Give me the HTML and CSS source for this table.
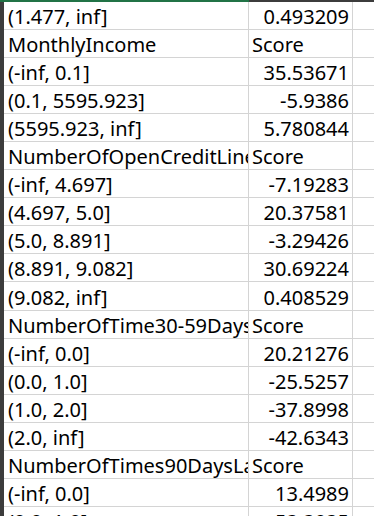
FILE: index.html
```html
<!DOCTYPE html>
<html>
<head>
<meta charset="utf-8">
<link rel="stylesheet" href="styles.css">
</head>
<body>
<div class="sheet">
  <div class="topbar">
    <div class="top-sel"></div>
    <div class="top-rest"></div>
  </div>
  <div class="main">
    <div class="rowhdr"></div>
    <div class="grid">
      <div class="row"><div class="cell a">(1.477, inf]</div><div class="cell b num">0.493209</div><div class="cell c"></div></div>
      <div class="row"><div class="cell a">MonthlyIncome</div><div class="cell b">Score</div><div class="cell c"></div></div>
      <div class="row"><div class="cell a">(-inf, 0.1]</div><div class="cell b num">35.53671</div><div class="cell c"></div></div>
      <div class="row"><div class="cell a">(0.1, 5595.923]</div><div class="cell b num">-5.9386</div><div class="cell c"></div></div>
      <div class="row"><div class="cell a">(5595.923, inf]</div><div class="cell b num">5.780844</div><div class="cell c"></div></div>
      <div class="row"><div class="cell a">NumberOfOpenCreditLinesAndLoans</div><div class="cell b">Score</div><div class="cell c"></div></div>
      <div class="row"><div class="cell a">(-inf, 4.697]</div><div class="cell b num">-7.19283</div><div class="cell c"></div></div>
      <div class="row"><div class="cell a">(4.697, 5.0]</div><div class="cell b num">20.37581</div><div class="cell c"></div></div>
      <div class="row"><div class="cell a">(5.0, 8.891]</div><div class="cell b num">-3.29426</div><div class="cell c"></div></div>
      <div class="row"><div class="cell a">(8.891, 9.082]</div><div class="cell b num">30.69224</div><div class="cell c"></div></div>
      <div class="row"><div class="cell a">(9.082, inf]</div><div class="cell b num">0.408529</div><div class="cell c"></div></div>
      <div class="row"><div class="cell a">NumberOfTime30-59DaysPastDueNotWorse</div><div class="cell b">Score</div><div class="cell c"></div></div>
      <div class="row"><div class="cell a">(-inf, 0.0]</div><div class="cell b num">20.21276</div><div class="cell c"></div></div>
      <div class="row"><div class="cell a">(0.0, 1.0]</div><div class="cell b num">-25.5257</div><div class="cell c"></div></div>
      <div class="row"><div class="cell a">(1.0, 2.0]</div><div class="cell b num">-37.8998</div><div class="cell c"></div></div>
      <div class="row"><div class="cell a">(2.0, inf]</div><div class="cell b num">-42.6343</div><div class="cell c"></div></div>
      <div class="row"><div class="cell a">NumberOfTimes90DaysLate</div><div class="cell b">Score</div><div class="cell c"></div></div>
      <div class="row"><div class="cell a">(-inf, 0.0]</div><div class="cell b num">13.4989</div><div class="cell c"></div></div>
      <div class="row"><div class="cell a">(0.0, 1.0]</div><div class="cell b num">-53.3035</div><div class="cell c"></div></div>
    </div>
  </div>
</div>
</body>
</html>
```
FILE: styles.css
```css
html, body {
  margin: 0;
  padding: 0;
  background: #ffffff;
  overflow: hidden;
}
.sheet {
  width: 374px;
  height: 516px;
  overflow: hidden;
  font-family: "Noto Sans", sans-serif;
  font-size: 20px;
  color: #000;
}
.topbar {
  display: flex;
  height: 2px;
}
.top-sel {
  width: 249px;
  background: #217346;
}
.top-rest {
  flex: 1;
  background: #3c3c3c;
}
.main {
  display: flex;
}
.rowhdr {
  width: 4px;
  flex: none;
  background: #3c3c3c;
}
.grid {
  flex: 1;
  display: flex;
  flex-direction: column;
}
.row {
  display: grid;
  grid-template-columns: 245px 104px 1fr;
  height: 28.06px;
  box-sizing: border-box;
  border-bottom: 1px solid #d4d4d4;
}
.cell {
  display: flex;
  align-items: flex-end;
  line-height: 20px;
  padding: 0 3px 2px 4px;
  white-space: nowrap;
  overflow: hidden;
  border-right: 1px solid #d4d4d4;
  box-sizing: border-box;
}
.cell.b {
  padding-left: 3px;
}
.cell.num {
  justify-content: flex-end;
  padding-right: 3px;
}
.cell.c {
  border-right: none;
}
```
